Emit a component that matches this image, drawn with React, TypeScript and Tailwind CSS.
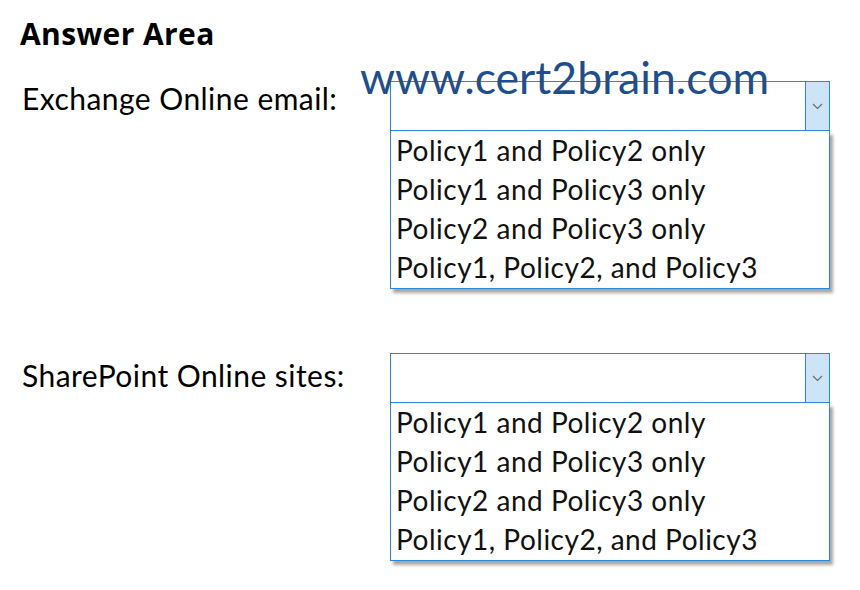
const OPTIONS = [
  'Policy1 and Policy2 only',
  'Policy1 and Policy3 only',
  'Policy2 and Policy3 only',
  'Policy1, Policy2, and Policy3',
];

function Dropdown() {
  return (
    <div className="w-[440px]">
      <div className="flex h-[50px] border border-[#2b88d8] bg-white">
        <div className="flex-1" />
        <div className="flex w-[24px] items-center justify-center border-l border-[#2b88d8] bg-[#cce4f7]">
          <svg width="11" height="7" viewBox="0 0 11 7" fill="none">
            <path d="M1 1l4.5 4.5L10 1" stroke="#6b6b6b" strokeWidth="1.2" />
          </svg>
        </div>
      </div>
      <ul className="h-[158px] border border-t-0 border-[#2b88d8] bg-white pl-[5px] shadow-[3px_4px_3px_rgba(0,0,0,0.35)]">
        {OPTIONS.map((o) => (
          <li key={o} className="h-[39px] text-[28px] leading-[39px] tracking-[0.5px] text-[#111]">
            {o}
          </li>
        ))}
      </ul>
    </div>
  );
}

export default function App() {
  return (
    <div className="relative h-[590px] w-[860px] overflow-hidden bg-white pl-5 pt-[17px] font-['Lato',sans-serif] text-black">
      <h1 className="font-['Open_Sans',sans-serif] text-[30px] font-bold leading-[34px] tracking-[0.4px]">Answer Area</h1>
      <div className="mt-[30px] flex">
        <div className="w-[370px] pl-[2px] text-[30px] leading-[34px] tracking-[0.45px]">Exchange Online email:</div>
        <Dropdown />
      </div>
      <div className="mt-[64px] flex">
        <div className="w-[370px] pl-[2px] pt-[5px] text-[30px] leading-[34px] tracking-[0.45px]">SharePoint Online sites:</div>
        <Dropdown />
      </div>
      {/* watermark sits over the first select */}
      <div className="absolute left-[360px] top-[51px] text-[44.6px] leading-[52px] text-[#1f4e8c]">
        www.cert2brain.com
      </div>
    </div>
  );
}
